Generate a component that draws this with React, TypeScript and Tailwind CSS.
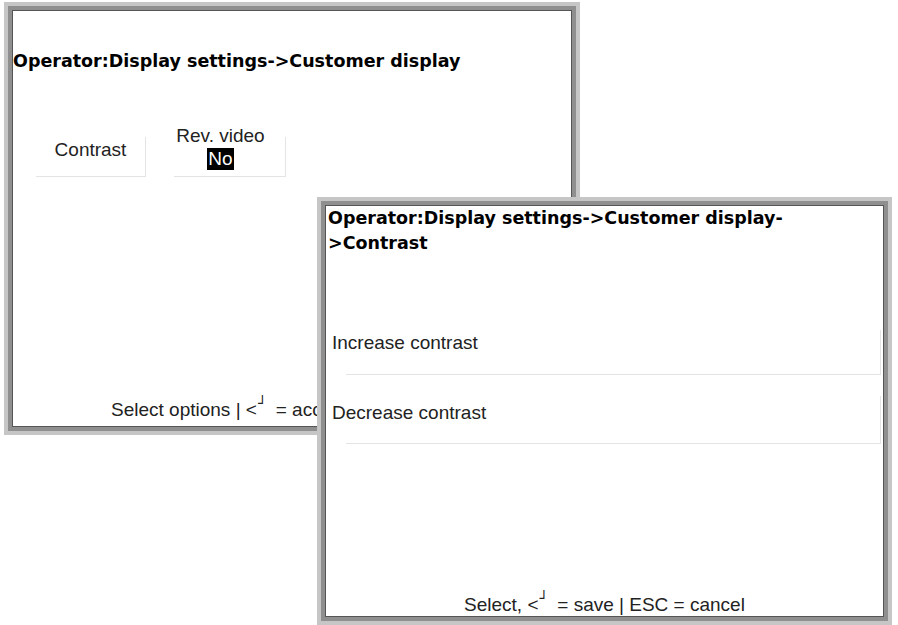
import React from "react"

const sans = { fontFamily: '"Liberation Sans", Arial, sans-serif' }

const Frame = ({ className, children }: { className: string; children: React.ReactNode }) => (
  <div className={`absolute bg-[#c6c6c6] p-[4px] ${className}`}>
    <div className="h-full w-full bg-[#8f8f8f] p-[4px]">
      <div className="h-full w-full border border-[#555] bg-white flex flex-col overflow-hidden">
        {children}
      </div>
    </div>
  </div>
)

const Enter = () => (
  <span className="inline-flex items-start">
    &lt;
    <span className="-mt-[3px] ml-[1px] mr-[4px] text-[14px] leading-[14px] font-['DejaVu_Sans',sans-serif] font-bold">┘</span>
  </span>
)

const Title = ({ children, className }: { children: React.ReactNode; className: string }) => (
  <div className={`font-['DejaVu_Sans',Verdana,sans-serif] font-bold text-[17.5px] leading-[25px] text-black ${className}`}>
    {children}
  </div>
)

const App = () => {
  return (
    <div className="relative w-[898px] h-[625px] bg-white overflow-hidden" style={sans}>
      <Frame className="left-[4px] top-[2px] w-[576px] h-[433px]">
        <Title className="pt-[38px] pl-[0px]">Operator:Display settings-&gt;Customer display</Title>
        <div className="flex mt-[63px] pl-[23px] gap-[28px] text-[19px] leading-[22px] text-[#222]">
          <div className="w-[110px] h-[40px] border-r border-b border-[#e4e4e4] flex justify-center pt-[2px]">
            Contrast
          </div>
          <div className="w-[112px] h-[40px] border-r border-b border-[#e4e4e4] flex flex-col items-center pr-[18px]">
            <span className="-mt-[12px]">Rev. video</span>
            <span className="bg-black text-white px-[1px] mt-[1px]">No</span>
          </div>
        </div>
        <div className="mt-auto pb-[5px] pl-[98px] text-left whitespace-nowrap text-[19px] leading-[22px] text-[#222]">
          Select options | <Enter /> = accept | ESC = cancel
        </div>
      </Frame>

      <Frame className="left-[317px] top-[197px] w-[575px] h-[428px]">
        <Title className="pl-[2px]">
          Operator:Display settings-&gt;Customer display-
          <br />
          &gt;Contrast
        </Title>
        <div className="mt-[74px] pl-[3px] pr-[2px] flex flex-col text-[19px] leading-[22px] text-[#222]">
          <div className="h-[45px] flex flex-col border-r border-[#e4e4e4]">
            <div className="flex-1 pt-[2px] pl-[3px]">Increase contrast</div>
            <div className="ml-[17px] h-px bg-[#e4e4e4]" />
          </div>
          <div className="mt-[21px] h-[48px] flex flex-col border-r border-[#e4e4e4]">
            <div className="flex-1 pt-[6px] pl-[3px]">Decrease contrast</div>
            <div className="ml-[17px] h-px bg-[#e4e4e4]" />
          </div>
        </div>
        <div className="mt-auto text-center whitespace-nowrap text-[19px] leading-[22px] text-[#222]">
          Select, <Enter /> = save | ESC = cancel
        </div>
      </Frame>
    </div>
  )
}

export default App
